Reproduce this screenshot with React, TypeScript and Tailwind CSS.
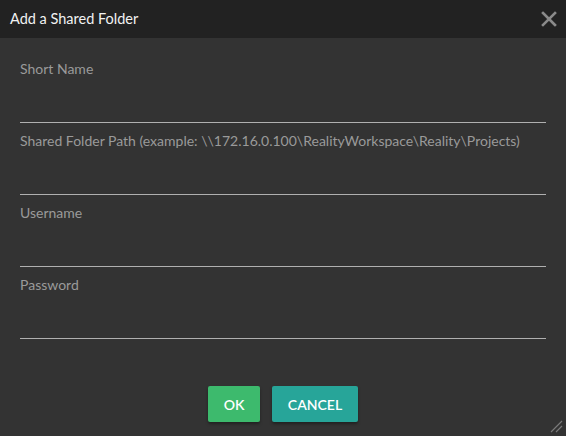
import React from 'react';

const fields = [
  'Short Name',
  'Shared Folder Path (example: \\\\172.16.0.100\\RealityWorkspace\\Reality\\Projects)',
  'Username',
  'Password',
];

export default function App() {
  return (
    <div
      className="w-[566px] h-[436px] bg-[#333333] flex flex-col relative overflow-hidden"
      style={{ fontFamily: 'Lato, "Open Sans", sans-serif' }}
    >
      <div className="h-[38px] bg-[#222222] flex items-center justify-between pl-[10px] pr-[9px] shrink-0">
        <span className="text-[14.5px] text-[#f2f2f2]">Add a Shared Folder</span>
        <svg width="16" height="16" viewBox="0 0 16 16" className="text-[#8a8a8a]">
          <path d="M2 2 L14 14 M14 2 L2 14" stroke="currentColor" strokeWidth="2.6" strokeLinecap="square" />
        </svg>
      </div>

      <div className="flex flex-col px-[20px] pt-[22px]">
        {fields.map(label => (
          <div key={label} className="flex flex-col mb-[9px]">
            <label className="h-[18px] leading-[18px] text-[14px] text-[#9a9a9a] whitespace-nowrap">{label}</label>
            <input
              type={label === 'Password' ? 'password' : 'text'}
              className="h-[45px] bg-transparent border-b border-[#b0b0b0] outline-none text-[14px] text-[#ddd]"
            />
          </div>
        ))}
      </div>

      <div className="flex justify-center gap-[12px] mt-[38px]">
        <button className="w-[52px] h-[36px] rounded-[2px] bg-[#3dba6d] text-white text-[14px] font-semibold shadow-[0_2px_3px_rgba(0,0,0,0.35)]">
          OK
        </button>
        <button className="w-[86px] h-[36px] rounded-[2px] bg-[#27a599] text-white text-[14px] font-semibold shadow-[0_2px_3px_rgba(0,0,0,0.35)]">
          CANCEL
        </button>
      </div>

      <svg width="16" height="16" viewBox="0 0 16 16" className="absolute right-[3px] bottom-[3px] text-[#7a7a7a]">
        <path d="M15 4 L4 15 M15 9 L9 15" stroke="currentColor" strokeWidth="1.2" />
      </svg>
    </div>
  );
}
